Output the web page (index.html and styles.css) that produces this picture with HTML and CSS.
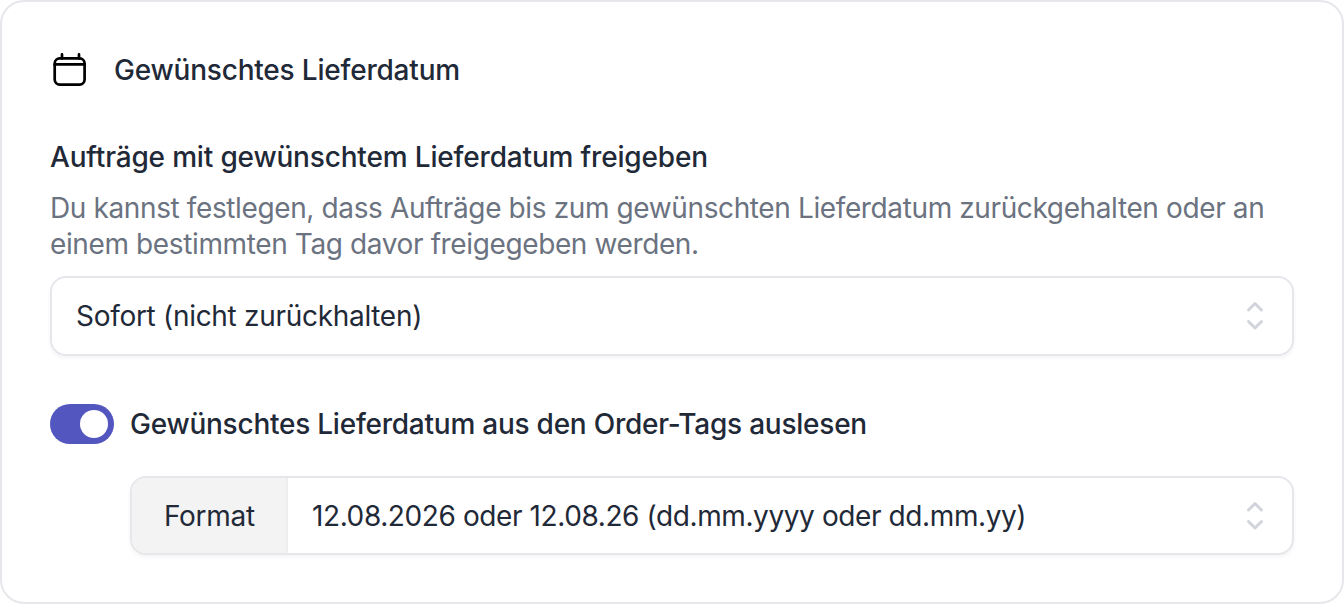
FILE: index.html
```html
<!DOCTYPE html>
<html lang="de">
<head>
    <meta charset="UTF-8">
    <title>Gewünschtes Lieferdatum</title>
    <link rel="stylesheet" href="styles.css">
</head>
<body>
    <div class="card">
        <div class="card-header">
            <svg class="calendar-icon" viewBox="0 0 36 36" fill="none" stroke="#000" stroke-width="2.7" stroke-linecap="round" stroke-linejoin="round">
                <path d="M12 2.4v4M29 2.4v4"/>
                <rect x="4.7" y="6.4" width="29.9" height="26.2" rx="5"/>
                <path d="M4.7 12.4h29.9"/>
            </svg>
            <h2>Gewünschtes Lieferdatum</h2>
        </div>

        <h3 class="field-title">Aufträge mit gewünschtem Lieferdatum freigeben</h3>
        <p class="field-help">Du kannst festlegen, dass Aufträge bis zum gewünschten Lieferdatum zurückgehalten oder an einem bestimmten Tag davor freigegeben werden.</p>

        <div class="select-box">
            <span class="select-value">Sofort (nicht zurückhalten)</span>
            <svg class="chevrons" viewBox="0 0 18 30" fill="none" stroke="#d1d5db" stroke-width="3" stroke-linecap="round" stroke-linejoin="round">
                <path d="M2.5 9l6.5-6.5 6.5 6.5M2.5 20.5l6.5 6.5 6.5-6.5"/>
            </svg>
        </div>

        <div class="toggle-row">
            <span class="toggle"><span class="toggle-knob"></span></span>
            <span class="toggle-label">Gewünschtes Lieferdatum aus den Order-Tags auslesen</span>
        </div>

        <div class="select-box format-box">
            <span class="format-addon">Format</span>
            <span class="select-value">12.08.2026 oder 12.08.26 (dd.mm.yyyy oder dd.mm.yy)</span>
            <svg class="chevrons" viewBox="0 0 18 30" fill="none" stroke="#d1d5db" stroke-width="3" stroke-linecap="round" stroke-linejoin="round">
                <path d="M2.5 9l6.5-6.5 6.5 6.5M2.5 20.5l6.5 6.5 6.5-6.5"/>
            </svg>
        </div>
    </div>
</body>
</html>
```

FILE: styles.css
```css
* {
    box-sizing: border-box;
}

body {
    margin: 0;
    background-color: #ffffff;
    font-family: Inter, "Liberation Sans", sans-serif;
    color: #1f2937;
}

.card {
    width: 1344px;
    height: 604px;
    padding: 50px 48px 0 48px;
    background-color: #ffffff;
    border: 2px solid #e5e7eb;
    border-radius: 24px;
}

.card-header {
    display: flex;
    align-items: center;
    gap: 28px;
    height: 36px;
}

.calendar-icon {
    width: 36px;
    height: 36px;
    flex-shrink: 0;
}

h2 {
    margin: 0;
    font-size: 28px;
    line-height: 40px;
    font-weight: 500;
    letter-spacing: -0.2px;
}

.field-title {
    margin: 49px 0 0 0;
    font-size: 28px;
    line-height: 40px;
    font-weight: 500;
    letter-spacing: -0.17px;
}

.field-help {
    margin: 13px 0 0 0;
    font-size: 28px;
    line-height: 36px;
    color: #6b7280;
    letter-spacing: -0.38px;
}

.select-box {
    display: flex;
    align-items: center;
    justify-content: space-between;
    height: 80px;
    margin-top: 14px;
    padding: 0 28px 0 24px;
    border: 2px solid #e5e7eb;
    border-radius: 16px;
    background-color: #ffffff;
    box-shadow: 0 2px 4px rgba(0, 0, 0, 0.05);
    font-size: 28px;
    letter-spacing: -0.3px;
}

.chevrons {
    width: 18px;
    height: 30px;
    flex-shrink: 0;
}

.toggle-row {
    display: flex;
    align-items: center;
    gap: 16px;
    margin-top: 48px;
}

.toggle {
    display: flex;
    align-items: center;
    justify-content: flex-end;
    width: 64px;
    height: 40px;
    padding: 0 6px;
    border-radius: 20px;
    background-color: #5256be;
}

.toggle-knob {
    width: 28px;
    height: 28px;
    border-radius: 50%;
    background-color: #ffffff;
}

.toggle-label {
    font-size: 28px;
    font-weight: 500;
    letter-spacing: -0.24px;
}

.format-box {
    height: 79px;
    margin: 32px 0 0 80px;
    padding-left: 0;
    justify-content: flex-start;
    overflow: hidden;
    letter-spacing: -0.4px;
}

.format-addon {
    display: flex;
    align-items: center;
    align-self: stretch;
    width: 156px;
    padding-left: 32px;
    margin-right: 24px;
    background-color: #f3f3f4;
    border-right: 2px solid #eeeeee;
    letter-spacing: -0.3px;
}

.format-box .chevrons {
    margin-left: auto;
}
```
